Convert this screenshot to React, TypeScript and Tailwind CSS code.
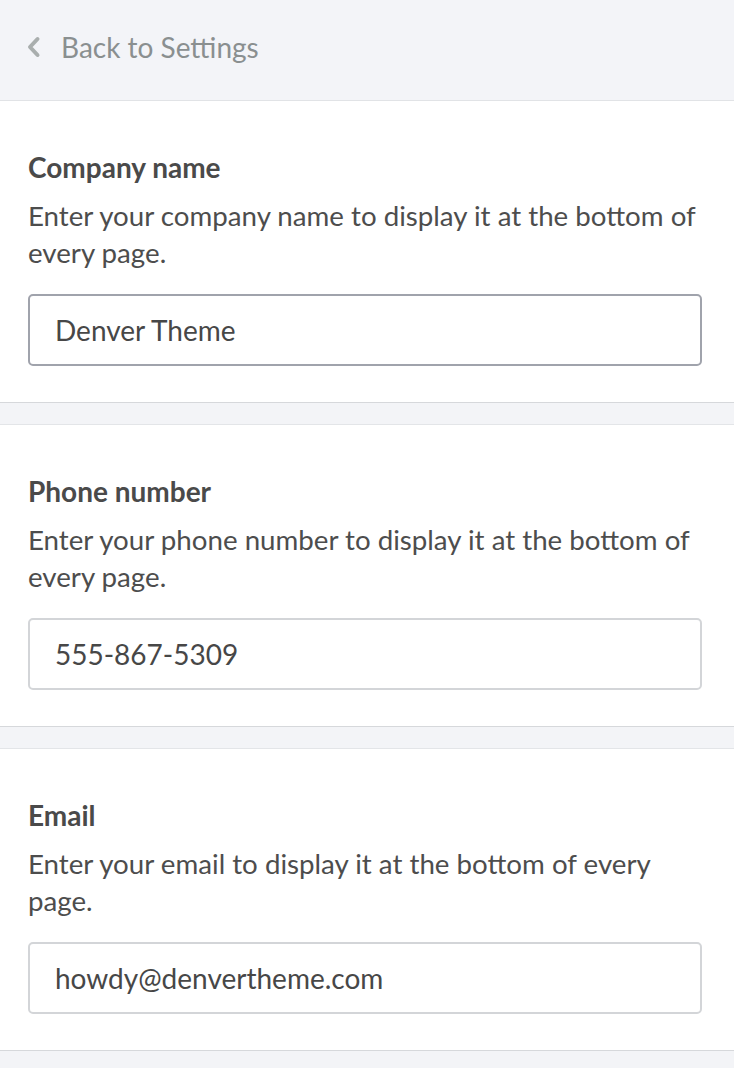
import { useState } from 'react';

type Field = {
  id: string;
  label: string;
  help: string;
  value: string;
  focused?: boolean;
};

const fields: Field[] = [
  {
    id: 'company',
    label: 'Company name',
    help: 'Enter your company name to display it at the bottom of every page.',
    value: 'Denver Theme',
    focused: true,
  },
  {
    id: 'phone',
    label: 'Phone number',
    help: 'Enter your phone number to display it at the bottom of every page.',
    value: '555-867-5309',
  },
  {
    id: 'email',
    label: 'Email',
    help: 'Enter your email to display it at the bottom of every page.',
    value: 'howdy@denvertheme.com',
  },
];

function ChevronLeft() {
  return (
    <svg width="15" height="22" viewBox="0 0 15 22" fill="none" className="shrink-0">
      <path d="M11.5 3 L4 11 L11.5 19" stroke="#a9aeae" strokeWidth="4" strokeLinecap="round" strokeLinejoin="round" />
    </svg>
  );
}

function SettingSection({ field, first }: { field: Field; first: boolean }) {
  const [value, setValue] = useState(field.value);
  return (
    <section
      className={
        first
          ? 'border-b border-[#d6d8db] bg-white pl-[28px] pr-[32px] pt-[48px] pb-[36px]'
          : 'border-t border-b border-t-[#e3e5e8] border-b-[#d6d8db] bg-white pl-[28px] pr-[32px] pt-[48px] pb-[36px]'
      }
    >
      <label htmlFor={field.id} className="block text-[28px] leading-[37px] font-bold text-[#4a4a4a]">
        {field.label}
      </label>
      <p className="mt-[11px] text-[27.7px] leading-[37px] text-[#4d4d4d]">{field.help}</p>
      <input
        id={field.id}
        value={value}
        onChange={(e) => setValue(e.target.value)}
        className={
          field.focused
            ? 'mt-[23px] block h-[72px] w-full rounded-[5px] border-2 border-[#a0a3ac] bg-white px-[25px] text-[28px] text-[#474747] outline-none'
            : 'mt-[23px] block h-[72px] w-full rounded-[5px] border-2 border-[#d3d5d8] bg-white px-[25px] text-[28px] text-[#474747] outline-none'
        }
      />
    </section>
  );
}

export default function App() {
  return (
    <div className="min-h-screen bg-[#f3f4f7] font-['Lato','Liberation_Sans',sans-serif]">
      <header className="flex h-[101px] items-center gap-[20px] border-b border-[#e1e3e6] bg-[#f3f4f8] pb-[6px] pl-[26px]">
        <ChevronLeft />
        <span className="text-[28px] text-[#8a8f90]">Back to Settings</span>
      </header>
      <div className="flex flex-col gap-[21px]">
        {fields.map((f, i) => (
          <SettingSection key={f.id} field={f} first={i === 0} />
        ))}
      </div>
    </div>
  );
}
